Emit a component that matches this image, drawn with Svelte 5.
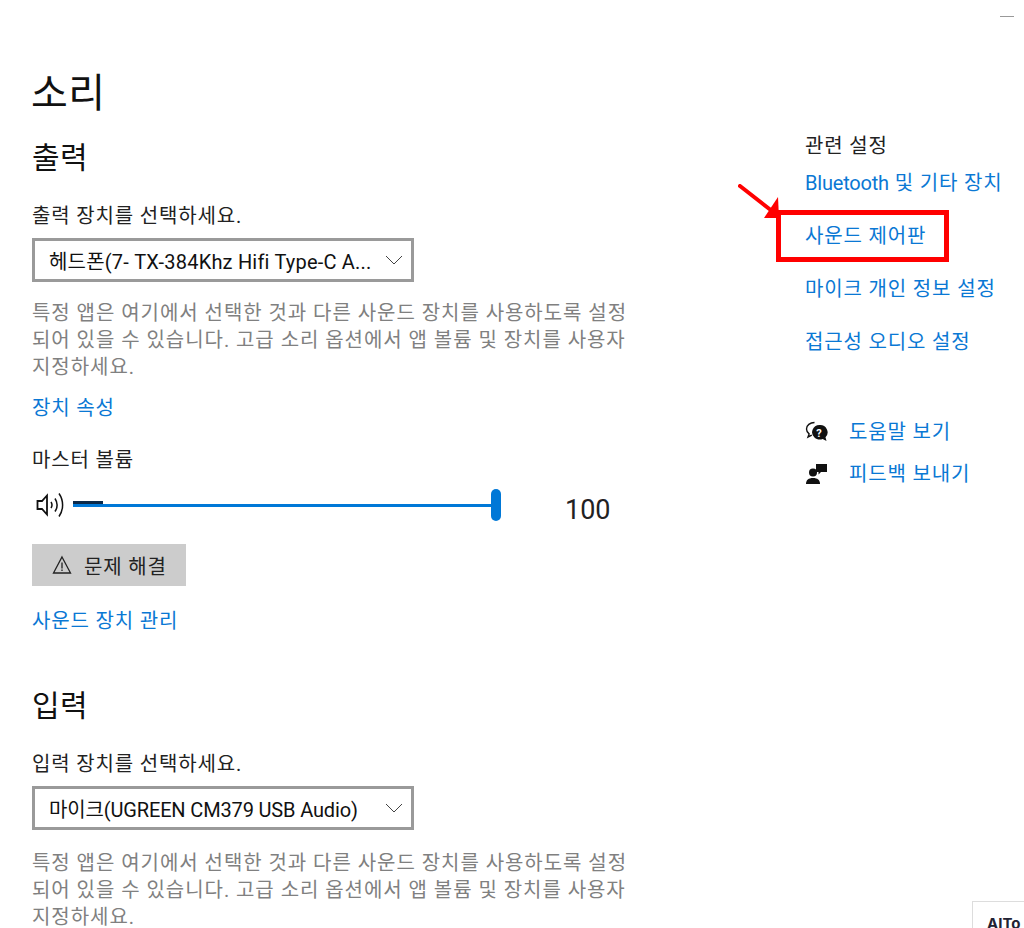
<script>
  const noteLines = [
    "특정 앱은 여기에서 선택한 것과 다른 사운드 장치를 사용하도록 설정",
    "되어 있을 수 있습니다. 고급 소리 옵션에서 앱 볼륨 및 장치를 사용자",
    "지정하세요."
  ];
  const related = ["사운드 제어판", "마이크 개인 정보 설정", "접근성 오디오 설정"];
</script>

<div class="page">
  <div class="titlebar"><span class="minimize"></span></div>

  <div class="columns">
    <main class="main">
      <h1>소리</h1>

      <h2 class="output-head">출력</h2>
      <p class="label">출력 장치를 선택하세요.</p>
      <div class="select">
        <span>헤드폰(7- TX-384Khz Hifi Type-C A...</span>
        <svg width="18" height="10" viewBox="0 0 18 10"><path d="M1 1l8 8 8-8" fill="none" stroke="#444" stroke-width="1" /></svg>
      </div>
      <p class="note">
        {#each noteLines as line}<span>{line}</span>{/each}
      </p>
      <a class="link props">장치 속성</a>

      <p class="label volume-label">마스터 볼륨</p>
      <div class="volume">
        <svg class="speaker" width="30" height="28" viewBox="0 0 30 28">
          <path d="M1.500 10h4.500L11 4.500v19L6 18H1.500z" fill="none" stroke="#111" stroke-width="1.800" />
          <path d="M15 11c1.200 1.800 1.200 4.200 0 6M19 7.500c2.600 4 2.600 9 0 13M23 2.500c4.800 7 4.800 16 0 23" fill="none" stroke="#111" stroke-width="1.500" />
        </svg>
        <div class="track">
          <span class="track-mark"></span>
          <span class="thumb"></span>
        </div>
        <span class="volume-value">100</span>
      </div>

      <button class="fix">
        <svg width="20" height="20" viewBox="0 0 20 20">
          <path d="M10 2L18.500 18H1.500z" fill="none" stroke="#222" stroke-width="1.300" />
          <path d="M10 7.500v6M10 14.500v1.500" fill="none" stroke="#222" stroke-width="1.300" />
        </svg>
        <span>문제 해결</span>
      </button>
      <a class="link manage">사운드 장치 관리</a>

      <h2 class="input-head">입력</h2>
      <p class="label">입력 장치를 선택하세요.</p>
      <div class="select input-select">
        <span>마이크(UGREEN CM379 USB Audio)</span>
        <svg width="18" height="10" viewBox="0 0 18 10"><path d="M1 1l8 8 8-8" fill="none" stroke="#444" stroke-width="1" /></svg>
      </div>
      <p class="note">
        {#each noteLines as line}<span>{line}</span>{/each}
      </p>
    </main>

    <aside class="side">
      <h3>관련 설정</h3>
      <ul class="related">
        <li><a class="link"><span class="latin">Bluetooth</span> 및 기타 장치</a></li>
        {#each related as item, i}
          <li class:highlight={i === 0}><a class="link">{item}</a></li>
        {/each}
      </ul>

      <div class="help">
        <div class="help-row">
          <svg width="24" height="22" viewBox="0 0 24 22">
            <path d="M9.500 1.500C5 1.500 1.500 4.300 1.500 8c0 2 1 3.700 2.600 4.900L3 16l3.800-1.900" fill="none" stroke="#111" stroke-width="1.400" />
            <path d="M14.500 4a7.500 7.300 0 0 0-4.800 12.800c2 1.900 5.500 2.300 8 1.100l3.800 2.100-1-3.700a7.500 7.300 0 0 0-6-12.300z" fill="#111" />
            <text class="help-q" x="14.500" y="15.500" text-anchor="middle">?</text>
          </svg>
          <a class="link">도움말 보기</a>
        </div>
        <div class="help-row">
          <svg width="24" height="22" viewBox="0 0 24 22">
            <circle cx="8" cy="9.500" r="4" fill="#111" />
            <path d="M1 21c0-4 2.500-6 7-6s7 2 7 6z" fill="#111" />
            <path d="M11 1h11v8h-6l-2.500 2.500V9H11z" fill="#111" />
          </svg>
          <a class="link">피드백 보내기</a>
        </div>
      </div>
    </aside>
  </div>

  <!-- annotation drawn over the screenshot -->
  <svg class="arrow" width="50" height="45" viewBox="0 0 50 45">
    <path d="M2 2L34 27" stroke="#f00" stroke-width="4" stroke-linecap="round" />
    <path d="M40 13L41 34H26z" fill="#f00" />
  </svg>
  <div class="badge">AITo</div>
</div>

<style>
  :global(body) {
    margin: 0;
    background: #fff;
  }

  .page {
    position: relative;
    width: 1024px;
    height: 928px;
    overflow: hidden;
    background: #fff;
    color: #1f1f1f;
    font-family: Roboto, "Noto Sans CJK KR", sans-serif;
    font-size: 20px;
    letter-spacing: 0.85px;
  }

  .titlebar {
    display: flex;
    justify-content: flex-end;
    height: 17px;
    padding-right: 10px;
    align-items: flex-end;
  }

  .minimize {
    width: 14px;
    height: 1px;
    background: #999;
  }

  .columns {
    display: flex;
  }

  .main {
    flex: none;
    width: 805px;
    padding-left: 32px;
    box-sizing: border-box;
  }

  h1 {
    margin: 0 0 0 -1px;
    padding-top: 51px;
    font-size: 40px;
    font-weight: 400;
    line-height: 52px;
    letter-spacing: 0.5px;
    color: #111;
  }

  h2 {
    margin: 0;
    font-size: 30px;
    font-weight: 400;
    line-height: 40px;
    letter-spacing: 0.5px;
    color: #111;
  }

  .output-head {
    margin-top: 18px;
  }

  .input-head {
    margin-top: 52px;
  }

  .label {
    margin: 0;
    font-size: 20px;
    line-height: 26px;
    color: #222;
  }

  .output-head + .label,
  .input-head + .label {
    margin-top: 25px;
  }

  .select {
    display: flex;
    align-items: center;
    justify-content: space-between;
    width: 382px;
    height: 44px;
    margin-top: 9px;
    padding: 0 8px 0 14px;
    box-sizing: border-box;
    border: 3px solid #9a9a9a;
    font-size: 20px;
    letter-spacing: 0.2px;
    color: #111;
    white-space: nowrap;
    overflow: hidden;
  }

  .input-select {
    letter-spacing: -0.15px;
  }

  .note {
    margin: 18px 0 0;
    font-size: 20px;
    line-height: 27px;
    letter-spacing: 0.95px;
    color: #808080;
  }

  .note span {
    display: block;
    white-space: nowrap;
  }

  .input-select + .note {
    margin-top: 20px;
  }

  .link {
    color: #0a78d4;
    font-size: 20px;
    line-height: 26px;
  }

  .latin {
    letter-spacing: -0.2px;
  }

  .props,
  .manage {
    display: block;
  }

  .props {
    margin-top: 14px;
  }

  .volume-label {
    margin-top: 26px;
  }

  .volume {
    display: flex;
    align-items: center;
    height: 44px;
    margin-top: 10px;
  }

  .speaker {
    flex: none;
    margin-left: 4px;
  }

  .track {
    position: relative;
    width: 424px;
    height: 3px;
    margin-left: 7px;
    background: #0078d7;
  }

  .track-mark {
    position: absolute;
    left: 0;
    top: -3px;
    width: 30px;
    height: 3px;
    background: #0b2a4a;
  }

  .thumb {
    position: absolute;
    right: -4px;
    top: -15px;
    width: 10px;
    height: 32px;
    border-radius: 5px;
    background: #0078d7;
  }

  .volume-value {
    margin-left: 68px;
    font-size: 27px;
    line-height: 44px;
    margin-top: 10px;
    letter-spacing: 0;
    color: #222;
  }

  .fix {
    display: flex;
    align-items: center;
    gap: 12px;
    width: 154px;
    height: 42px;
    margin-top: 17px;
    padding: 0 0 0 20px;
    border: 0;
    background: #cccccc;
    font: inherit;
    letter-spacing: inherit;
    white-space: nowrap;
    color: #222;
  }

  .manage {
    margin-top: 22px;
  }

  .side {
    padding-top: 116px;
  }

  h3 {
    margin: 0;
    font-size: 20px;
    font-weight: 400;
    line-height: 26px;
    color: #222;
  }

  .related {
    list-style: none;
    margin: 11px 0 0;
    padding: 0;
    display: flex;
    flex-direction: column;
    gap: 27px;
  }

  .related li {
    position: relative;
    white-space: nowrap;
  }

  .related li.highlight::before {
    content: "";
    position: absolute;
    left: -29px;
    top: -13px;
    width: 163px;
    height: 42px;
    border: 5px solid #f00;
  }

  .help {
    margin-top: 64px;
    display: flex;
    flex-direction: column;
    gap: 16px;
  }

  .help-row {
    display: flex;
    align-items: center;
    gap: 20px;
  }

  .help-q {
    fill: #fff;
    font-size: 11px;
    font-weight: 700;
    font-family: Roboto, sans-serif;
  }

  .arrow {
    position: absolute;
    left: 738px;
    top: 184px;
  }

  .badge {
    position: absolute;
    left: 972px;
    top: 901px;
    width: 60px;
    height: 40px;
    padding: 12px 0 0 14px;
    box-sizing: border-box;
    border: 1px solid #ddd;
    background: #fff;
    font-family: Inter, sans-serif;
    font-weight: 700;
    font-size: 15px;
    letter-spacing: 0;
    color: #223;
  }
</style>
